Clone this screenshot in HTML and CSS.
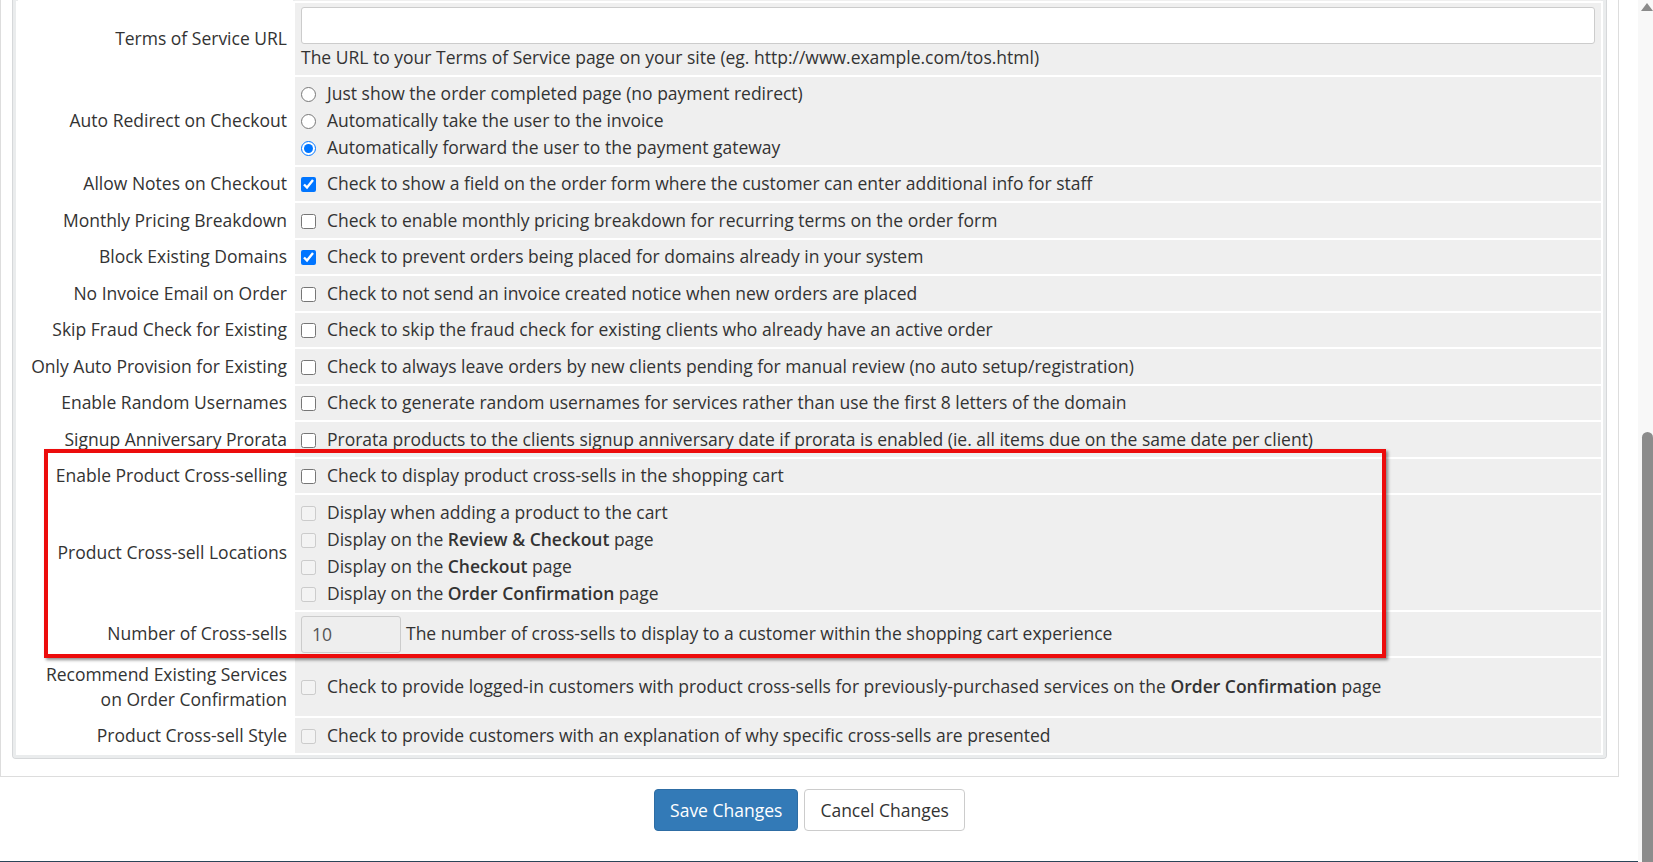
FILE: index.html
```html
<!DOCTYPE html>
<html lang="en">
<head>
    <meta charset="UTF-8">
    <meta name="viewport" content="width=device-width, initial-scale=1.0">
    <title>General Settings - Ordering</title>
    <link rel="stylesheet" href="styles.css">
</head>
<body>
    <div class="page">
        <div class="main">
            <div class="panel">
                <div class="tab-box">
                    <table class="form">
                        <tr class="cut"><td class="label"></td><td class="field"></td></tr>
                        <tr>
                            <td class="label">Terms of Service URL</td>
                            <td class="field">
                                <input type="text" class="text-input">
                                <div>The URL to your Terms of Service page on your site (eg. http://www.example.com/tos.html)</div>
                            </td>
                        </tr>
                        <tr>
                            <td class="label">Auto Redirect on Checkout</td>
                            <td class="field">
                                <label class="line"><input type="radio" name="redirect">Just show the order completed page (no payment redirect)</label>
                                <label class="line"><input type="radio" name="redirect">Automatically take the user to the invoice</label>
                                <label class="line"><input type="radio" name="redirect" checked>Automatically forward the user to the payment gateway</label>
                            </td>
                        </tr>
                        <tr>
                            <td class="label">Allow Notes on Checkout</td>
                            <td class="field"><label><input type="checkbox" checked>Check to show a field on the order form where the customer can enter additional info for staff</label></td>
                        </tr>
                        <tr>
                            <td class="label">Monthly Pricing Breakdown</td>
                            <td class="field"><label><input type="checkbox">Check to enable monthly pricing breakdown for recurring terms on the order form</label></td>
                        </tr>
                        <tr>
                            <td class="label">Block Existing Domains</td>
                            <td class="field"><label><input type="checkbox" checked>Check to prevent orders being placed for domains already in your system</label></td>
                        </tr>
                        <tr>
                            <td class="label">No Invoice Email on Order</td>
                            <td class="field"><label><input type="checkbox">Check to not send an invoice created notice when new orders are placed</label></td>
                        </tr>
                        <tr>
                            <td class="label">Skip Fraud Check for Existing</td>
                            <td class="field"><label><input type="checkbox">Check to skip the fraud check for existing clients who already have an active order</label></td>
                        </tr>
                        <tr>
                            <td class="label">Only Auto Provision for Existing</td>
                            <td class="field"><label><input type="checkbox">Check to always leave orders by new clients pending for manual review (no auto setup/registration)</label></td>
                        </tr>
                        <tr>
                            <td class="label">Enable Random Usernames</td>
                            <td class="field"><label><input type="checkbox">Check to generate random usernames for services rather than use the first 8 letters of the domain</label></td>
                        </tr>
                        <tr>
                            <td class="label">Signup Anniversary Prorata</td>
                            <td class="field"><label><input type="checkbox">Prorata products to the clients signup anniversary date if prorata is enabled (ie. all items due on the same date per client)</label></td>
                        </tr>
                        <tr>
                            <td class="label">Enable Product Cross-selling</td>
                            <td class="field"><label><input type="checkbox">Check to display product cross-sells in the shopping cart</label></td>
                        </tr>
                        <tr>
                            <td class="label">Product Cross-sell Locations</td>
                            <td class="field">
                                <label class="line"><input type="checkbox" disabled>Display when adding a product to the cart</label>
                                <label class="line"><input type="checkbox" disabled>Display on the <b>Review &amp; Checkout</b> page</label>
                                <label class="line"><input type="checkbox" disabled>Display on the <b>Checkout</b> page</label>
                                <label class="line"><input type="checkbox" disabled>Display on the <b>Order Confirmation</b> page</label>
                            </td>
                        </tr>
                        <tr>
                            <td class="label">Number of Cross-sells</td>
                            <td class="field">
                                <div class="inline-field">
                                    <input type="text" class="num-input" value="10" disabled>
                                    <span>The number of cross-sells to display to a customer within the shopping cart experience</span>
                                </div>
                            </td>
                        </tr>
                        <tr>
                            <td class="label two-line">Recommend Existing Services<br>on Order Confirmation</td>
                            <td class="field"><label><input type="checkbox" disabled>Check to provide logged-in customers with product cross-sells for previously-purchased services on the <b>Order Confirmation</b> page</label></td>
                        </tr>
                        <tr>
                            <td class="label">Product Cross-sell Style</td>
                            <td class="field"><label><input type="checkbox" disabled>Check to provide customers with an explanation of why specific cross-sells are presented</label></td>
                        </tr>
                    </table>
                </div>
            </div>

            <div class="actions">
                <button class="btn btn-primary">Save Changes</button>
                <button class="btn btn-default">Cancel Changes</button>
            </div>

            <div class="footer-line"></div>

            <!-- highlight around the cross-sell settings -->
            <div class="highlight"></div>
        </div>

        <div class="scrollbar">
            <div class="scroll-arrow"></div>
            <div class="scroll-thumb"></div>
        </div>
    </div>
</body>
</html>
```

FILE: styles.css
```css
html, body {
    margin: 0;
    height: 100%;
    overflow: hidden;
}
body {
    font-family: "Open Sans", "DejaVu Sans", sans-serif;
    font-size: 17.5px;
    color: #333;
    background: #fff;
}
.page {
    display: flex;
    height: 862px;
}
.main {
    flex: 1;
    display: flex;
    flex-direction: column;
    position: relative;
}
.panel {
    border: 1px solid #ddd;
    border-top: none;
    margin-right: 19px;
    padding: 0 11px 17px 11px;
}
.tab-box {
    border: 1px solid #d6d8da;
    border-top: none;
    border-radius: 0 0 4px 4px;
    padding: 0 3px 3px 3px;
    box-shadow: inset 0 0 0 3px #eaeced;
}
table.form {
    width: 100%;
    border-collapse: separate;
    border-spacing: 2px;
    margin-top: -2px;
}
.form td {
    padding: 3.5px 6px;
    line-height: 27.5px;
    vertical-align: middle;
}
.form td.label {
    width: 263px;
    padding-right: 6px;
    text-align: right;
    background: #fff;
}
.form td.two-line {
    line-height: 25.5px;
}
.form td.field {
    background: #efefef;
}
.form tr.cut td {
    height: 1px;
    padding: 0;
    line-height: 1px;
}
.text-input {
    display: block;
    width: 100%;
    height: 37px;
    box-sizing: border-box;
    border: 1px solid #ccc;
    border-radius: 3px;
    background: #fff;
    margin: 0;
}
.inline-field {
    display: flex;
    align-items: center;
    gap: 5px;
}
.num-input {
    width: 100px;
    height: 37px;
    box-sizing: border-box;
    border: 1px solid #ccc;
    border-radius: 3px;
    background: #eee;
    color: #555;
    font-family: inherit;
    font-size: 17.5px;
    padding: 0 10px;
    margin: 0;
}
.line {
    display: block;
    line-height: 27px;
}
input[type="checkbox"], input[type="radio"] {
    width: 15px;
    height: 15px;
    margin: 0 11px 0 0;
    vertical-align: -2px;
}
b {
    font-weight: 600;
}
.actions {
    margin: 12px 19px 0 0;
    display: flex;
    justify-content: center;
    gap: 6px;
}
.btn {
    font-family: inherit;
    font-size: 17.5px;
    height: 42px;
    padding: 0 15px;
    border-radius: 4px;
    cursor: pointer;
}
.btn-primary {
    background: #337ab7;
    border: 1px solid #2e6da4;
    color: #fff;
}
.btn-default {
    background: #fff;
    border: 1px solid #ccc;
    color: #333;
}
.footer-line {
    margin-top: auto;
    height: 1px;
    background: #2b4558;
}
.highlight {
    position: absolute;
    left: 44px;
    top: 449px;
    width: 1334px;
    height: 201px;
    border: 4px solid #ec0c0c;
    box-shadow: 2px 2px 3px rgba(0, 0, 0, 0.45);
}
.scrollbar {
    width: 15px;
    background: #f8f8f8;
    display: flex;
    flex-direction: column;
}
.scroll-arrow {
    width: 0;
    height: 0;
    margin: 3px 0 0 3px;
    border-left: 6px solid transparent;
    border-right: 6px solid transparent;
    border-bottom: 8px solid #8a8a8a;
}
.scroll-thumb {
    flex: 1;
    margin: 421px 0 0 4px;
    background: #8c8c8c;
    border-radius: 6px 6px 0 0;
}
```
